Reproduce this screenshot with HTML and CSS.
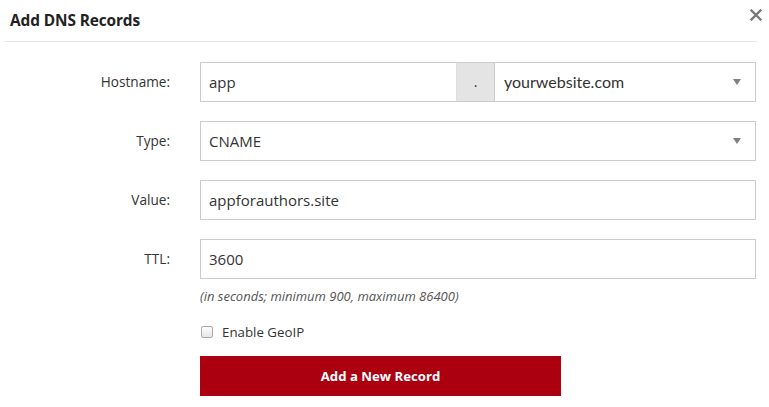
FILE: index.html
```html
<!DOCTYPE html>
<html>
<head>
<meta charset="utf-8">
<link rel="stylesheet" href="styles.css">
</head>
<body>
<div class="modal">
  <div class="modal-header">
    <h1 class="modal-title">Add DNS Records</h1>
    <svg class="close" width="12" height="12" viewBox="0 0 12 12" aria-label="Close"><path d="M1.5 1.5 L10.5 10.5 M10.5 1.5 L1.5 10.5" stroke="#7a7a7a" stroke-width="2.4" stroke-linecap="square"/></svg>
  </div>
  <form class="form">
    <div class="row">
      <label class="label">Hostname:</label>
      <div class="field group">
        <div class="box host">app</div>
        <div class="addon">.</div>
        <div class="box select domain"><span>yourwebsite.com</span><span class="caret"></span></div>
      </div>
    </div>
    <div class="row">
      <label class="label">Type:</label>
      <div class="field">
        <div class="box select"><span>CNAME</span><span class="caret"></span></div>
      </div>
    </div>
    <div class="row">
      <label class="label">Value:</label>
      <div class="field">
        <div class="box">appforauthors.site</div>
      </div>
    </div>
    <div class="row ttl">
      <label class="label">TTL:</label>
      <div class="field">
        <div class="box">3600</div>
        <p class="hint">(in seconds; minimum 900, maximum 86400)</p>
      </div>
    </div>
    <div class="row check-row">
      <span></span>
      <div class="field">
        <label class="check"><span class="checkbox"></span>Enable GeoIP</label>
        <button type="button" class="btn">Add a New Record</button>
      </div>
    </div>
  </form>
</div>
</body>
</html>
```

FILE: styles.css
```css
* { box-sizing: border-box; }
html, body { margin: 0; padding: 0; background: #fff; }
body {
  font-family: "Open Sans", "Noto Sans", sans-serif;
  color: #333;
  width: 769px;
  height: 407px;
  overflow: hidden;
}
.modal-header {
  position: relative;
  height: 42px;
  margin: 0 12px 0 5px;
  border-bottom: 1px solid #e5e5e5;
  display: flex;
  align-items: center;
}
.modal-title {
  margin: 0 0 1px 5px;
  font-size: 15.4px;
  font-weight: 700;
  color: #222;
  letter-spacing: -0.1px;
}
.close {
  position: absolute;
  right: -5px;
  top: 9px;
}
.form {
  padding: 20px 13px 0 0;
}
.row {
  display: grid;
  grid-template-columns: 170px 1fr;
  column-gap: 30px;
  margin-bottom: 19px;
}
.label {
  text-align: right;
  font-size: 13.6px;
  line-height: 40px;
  color: #333;
}
.field { min-width: 0; }
.group { display: flex; }
.box {
  height: 40px;
  border: 1px solid #ccc;
  padding: 0 8px;
  font-size: 15px;
  line-height: 38px;
  color: #333;
  background: #fff;
  white-space: nowrap;
}
.host { width: 257px; border-right: 1px solid #ddd; }
.addon {
  width: 38px;
  height: 40px;
  background: #e4e4e4;
  border: 1px solid #ccc;
  border-left: none;
  border-right: 1px solid #ccc;
  text-align: center;
  font-size: 14px;
  line-height: 38px;
  color: #333;
}
.domain { flex: 1; border-left: none; font-family: "Lato", sans-serif; font-size: 16px; padding-left: 9px; }
.select { display: flex; justify-content: space-between; align-items: center; }
.caret {
  width: 0; height: 0;
  border-left: 4px solid transparent;
  border-right: 4px solid transparent;
  border-top: 6px solid #808080;
  margin-right: 6px;
}
.ttl { margin-bottom: 0; }
.hint {
  margin: 9px 0 0 0;
  font-size: 13px;
  font-style: italic;
  color: #555;
  line-height: 16px;
}
.check-row { margin-top: 20px; }
.check {
  display: flex;
  align-items: center;
  font-size: 13.3px;
  color: #333;
  height: 16px;
}
.checkbox {
  width: 12px;
  height: 12px;
  border: 1px solid #aaa;
  border-radius: 2px;
  background: linear-gradient(#fdfdfd, #e6e6e6);
  margin: 0 9px 0 1px;
}
.btn {
  display: block;
  margin-top: 16px;
  width: 361px;
  height: 40px;
  border: none;
  background: #ab0010;
  color: #fff;
  font-family: "Open Sans", sans-serif;
  font-weight: 700;
  font-size: 13.2px;
  padding: 0;
}
```
